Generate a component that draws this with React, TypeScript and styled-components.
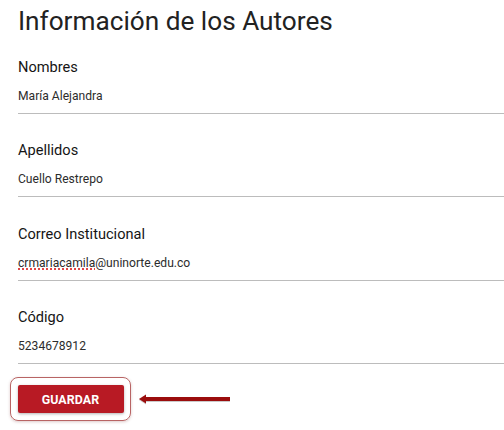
import { createGlobalStyle, styled } from 'styled-components';

const GlobalStyle = createGlobalStyle`
  html, body {
    margin: 0;
    padding: 0;
    background: #ffffff;
    font-family: Roboto, 'Liberation Sans', Arial, sans-serif;
  }
`;

type Field = {
  label: string;
  value: string;
  misspelled?: string;
};

const fields: Field[] = [
  { label: 'Nombres', value: 'María Alejandra' },
  { label: 'Apellidos', value: 'Cuello Restrepo' },
  { label: 'Correo Institucional', value: '@uninorte.edu.co', misspelled: 'crmariacamila' },
  { label: 'Código', value: '5234678912' },
];

const App = () => {
  return (
    <Page>
      <GlobalStyle />
      <Title>Información de los Autores</Title>
      <Form>
        {fields.map((field) => (
          <FieldRow key={field.label}>
            <Label>{field.label}</Label>
            <Value>
              {field.misspelled && <Misspelled>{field.misspelled}</Misspelled>}
              {field.value}
            </Value>
          </FieldRow>
        ))}
      </Form>
      <Actions>
        <Highlight>
          <SaveButton type="button">GUARDAR</SaveButton>
        </Highlight>
        <Arrow width="94" height="14" viewBox="0 0 94 14">
          <defs>
            <filter id="arrowShadow" x="-10%" y="-50%" width="120%" height="200%">
              <feDropShadow dx="0" dy="0.6" stdDeviation="0.6" floodColor="#000" floodOpacity="0.35" />
            </filter>
          </defs>
          <g filter="url(#arrowShadow)" fill="#9b1111">
            <rect x="7" y="5" width="85" height="4" />
            <path d="M1 7 L8 2.5 L8 11.5 Z" />
          </g>
        </Arrow>
      </Actions>
    </Page>
  );
};

export default App;

const Page = styled.main`
  width: 504px;
  height: 430px;
  overflow: hidden;
  padding-left: 18px;
  box-sizing: border-box;
`;

const Title = styled.h1`
  margin: 4px 0 0;
  font-size: 26.2px;
  line-height: 34px;
  font-weight: 400;
  color: #222222;
`;

const Form = styled.div`
  display: flex;
  flex-direction: column;
  gap: 26.3px;
  margin-top: 19px;
`;

const FieldRow = styled.div`
  display: flex;
  flex-direction: column;
  padding-bottom: 9px;
  border-bottom: 1px solid #bcbcbc;
`;

const Label = styled.div`
  font-size: 14.6px;
  line-height: 20px;
  color: #151515;
  margin-bottom: 11px;
`;

const Value = styled.div`
  font-size: 12.1px;
  line-height: 16px;
  color: #2c2c2c;
`;

const Misspelled = styled.span`
  text-decoration: underline dotted #e04848;
  text-decoration-thickness: 1.5px;
  text-underline-offset: 2px;
`;

const Actions = styled.div`
  display: flex;
  align-items: center;
  gap: 7px;
  margin-top: 13px;
  margin-left: -8px;
`;

const Highlight = styled.div`
  display: flex;
  padding: 7.5px 6.5px 6.5px;
  border: 1.5px solid #b86464;
  border-radius: 8px;
  box-shadow: 0 1px 3px rgba(120, 40, 40, 0.25);
`;

const SaveButton = styled.button`
  width: 106px;
  height: 28px;
  border: none;
  border-radius: 2px;
  background: #b81a24;
  color: #ffffff;
  font-family: Roboto, 'Liberation Sans', Arial, sans-serif;
  font-size: 12.4px;
  font-weight: 700;
  letter-spacing: 0.1px;
  box-shadow: 0 1px 3px rgba(0, 0, 0, 0.3);
  cursor: pointer;
`;

const Arrow = styled.svg`
  display: block;
  margin-top: 1px;
`;
